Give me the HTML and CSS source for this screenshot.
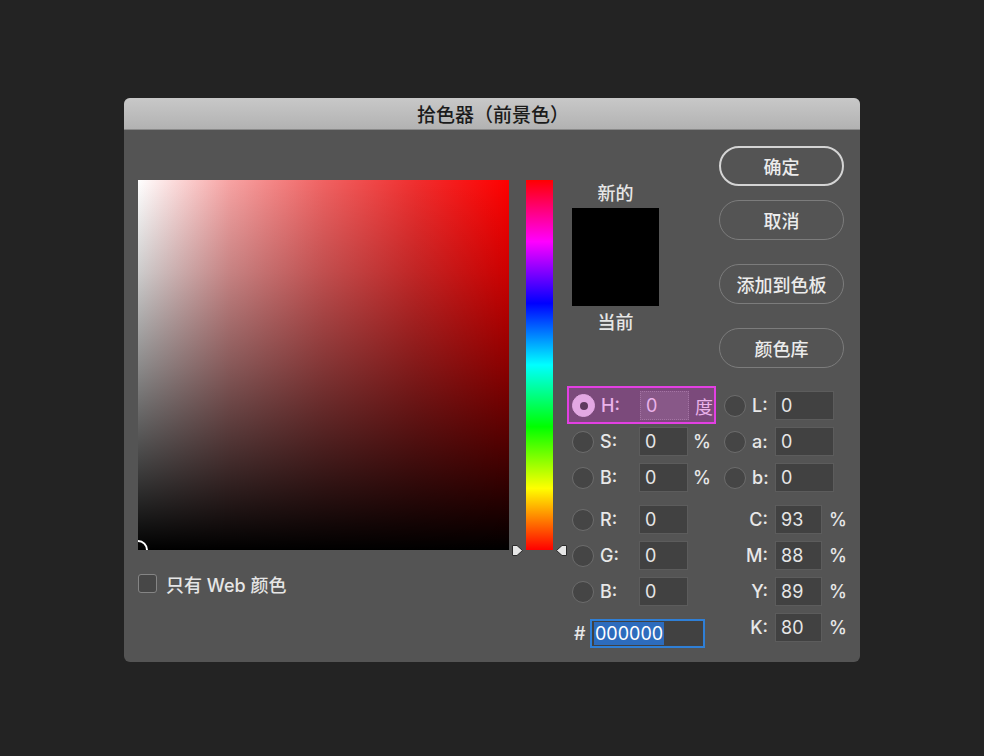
FILE: index.html
```html
<!DOCTYPE html>
<html lang="zh-CN">
<head>
<meta charset="utf-8">
<title>拾色器（前景色）</title>
<link rel="stylesheet" href="styles.css">
</head>
<body>
<div class="dialog">
  <div class="titlebar">拾色器（前景色）</div>
  <div class="content">
    <div class="left">
      <div class="field">
        <div class="field-marker"></div>
      </div>
      <div class="webonly"><span class="checkbox"></span><span>只有 Web 颜色</span></div>
    </div>
    <div class="hue-wrap">
      <div class="hue"></div>
      <svg class="tri tri-l" width="13" height="13" viewBox="0 0 13 13"><path d="M1.5 1.5 H6 L11.5 6.5 L6 11.5 H1.5 Z" fill="#e6e6e6" stroke="#2a2a2a" stroke-width="1" stroke-linejoin="round"/></svg>
      <svg class="tri tri-r" width="13" height="13" viewBox="0 0 13 13"><path d="M11.5 1.5 H7 L1.5 6.5 L7 11.5 H11.5 Z" fill="#e6e6e6" stroke="#2a2a2a" stroke-width="1" stroke-linejoin="round"/></svg>
    </div>
    <div class="right">
      <div class="top">
        <div class="swatch-col">
          <div class="sw-label">新的</div>
          <div class="swatch"></div>
          <div class="sw-label sw-label-bottom">当前</div>
        </div>
        <div class="buttons">
          <div class="btn btn-default">确定</div>
          <div class="btn">取消</div>
          <div class="btn btn-gap">添加到色板</div>
          <div class="btn btn-gap">颜色库</div>
        </div>
      </div>
      <div class="fields">
        <div class="col col-a">
          <div class="row row-h"><span class="radio on"></span><span class="lbl">H:</span><span class="inp">0</span><span class="unit">度</span></div>
          <div class="row"><span class="radio"></span><span class="lbl">S:</span><span class="inp">0</span><span class="unit">%</span></div>
          <div class="row"><span class="radio"></span><span class="lbl">B:</span><span class="inp">0</span><span class="unit">%</span></div>
          <div class="row row-sep"><span class="radio"></span><span class="lbl">R:</span><span class="inp">0</span></div>
          <div class="row"><span class="radio"></span><span class="lbl">G:</span><span class="inp">0</span></div>
          <div class="row"><span class="radio"></span><span class="lbl">B:</span><span class="inp">0</span></div>
          <div class="row row-hex"><span class="hash">#</span><span class="hex"><span class="sel">000000</span></span></div>
        </div>
        <div class="col col-b">
          <div class="row"><span class="radio"></span><span class="lbl lbl-b">L:</span><span class="inp inp-wide">0</span></div>
          <div class="row"><span class="radio"></span><span class="lbl lbl-b">a:</span><span class="inp inp-wide">0</span></div>
          <div class="row"><span class="radio"></span><span class="lbl lbl-b">b:</span><span class="inp inp-wide">0</span></div>
          <div class="row row-sep"><span class="lbl lbl-c">C:</span><span class="inp inp-c">93</span><span class="unit unit-c">%</span></div>
          <div class="row"><span class="lbl lbl-c">M:</span><span class="inp inp-c">88</span><span class="unit unit-c">%</span></div>
          <div class="row"><span class="lbl lbl-c">Y:</span><span class="inp inp-c">89</span><span class="unit unit-c">%</span></div>
          <div class="row"><span class="lbl lbl-c">K:</span><span class="inp inp-c">80</span><span class="unit unit-c">%</span></div>
        </div>
      </div>
    </div>
  </div>
</div>
</body>
</html>
```

FILE: styles.css
```css
html, body {
  margin: 0;
  padding: 0;
}
body {
  background: #232323;
  width: 984px;
  height: 756px;
  padding-top: 98px;
  box-sizing: border-box;
  font-family: Inter, "Noto Sans CJK SC", sans-serif;
  font-size: 18px;
  color: #e8e8e8;
}
.dialog {
  width: 736px;
  height: 564px;
  margin: 0 auto;
  background: #545454;
  border-radius: 6px;
  overflow: hidden;
}
.titlebar {
  height: 32px;
  box-sizing: border-box;
  display: flex;
  align-items: center;
  justify-content: center;
  background: linear-gradient(#c8c8c8, #b2b2b2);
  border-bottom: 1px solid #8a8a8a;
  color: #1b1b1b;
  font-size: 19px;
  font-weight: 500;
  padding-left: 2px;
}
.content {
  display: flex;
  padding: 0 16px 0 14px;
  height: 532px;
}
.left {
  width: 371px;
  flex: none;
  margin-right: 17px;
}
.field {
  position: relative;
  margin-top: 50px;
  width: 371px;
  height: 370px;
  overflow: hidden;
  background:
    linear-gradient(to top, #000 0%, rgba(0,0,0,0.72) 25%, rgba(0,0,0,0.45) 50%, rgba(0,0,0,0.2) 75%, rgba(0,0,0,0) 100%),
    linear-gradient(to right, #fff 0%, #f7a2a2 25%, #f06262 50%, #f02e2e 75%, #f00 100%);
}
.field-marker {
  position: absolute;
  left: -10px;
  bottom: -10px;
  width: 20px;
  height: 20px;
  box-sizing: border-box;
  border: 2px solid #fff;
  border-radius: 50%;
}
.webonly {
  display: flex;
  align-items: center;
  margin-top: 24px;
  height: 19px;
  font-weight: 500;
  color: #e6e6e6;
}
.checkbox {
  width: 19px;
  height: 19px;
  box-sizing: border-box;
  border: 1px solid #858585;
  border-radius: 3px;
  background: #474747;
  margin-right: 9px;
}
.hue-wrap {
  position: relative;
  width: 27px;
  flex: none;
  margin-right: 14px;
}
.hue {
  margin-top: 50px;
  height: 370px;
  background: linear-gradient(to bottom, #f00 0%, #f0f 16.67%, #00f 33.33%, #0ff 50%, #0f0 66.67%, #ff0 83.33%, #f00 100%);
}
.tri {
  position: absolute;
  top: 414px;
}
.tri-l { left: -15px; }
.tri-r { left: 29px; }
.right {
  width: 277px;
  flex: none;
}
.top {
  display: flex;
  padding-top: 16px;
}
.swatch-col {
  width: 152px;
  flex: none;
  padding: 38px 0 0 5px;
  box-sizing: border-box;
}
.sw-label {
  width: 87px;
  height: 20px;
  line-height: 20px;
  text-align: center;
  font-weight: 500;
  color: #e6e6e6;
}
.swatch {
  width: 87px;
  height: 98px;
  margin-top: 4px;
  background: #000;
}
.sw-label-bottom {
  margin-top: 7px;
}
.buttons {
  width: 125px;
  flex: none;
  display: flex;
  flex-direction: column;
  gap: 14px;
}
.btn {
  height: 40px;
  box-sizing: border-box;
  border: 1px solid #7c7c7c;
  border-radius: 20px;
  display: flex;
  align-items: center;
  justify-content: center;
  font-weight: 500;
  color: #ececec;
}
.btn-default {
  border: 2px solid #d4d4d4;
}
.btn-gap {
  margin-top: 10px;
}
.fields {
  display: flex;
  gap: 8px;
  margin-top: 23px;
}
.col {
  display: flex;
  flex-direction: column;
  gap: 7px;
}
.col-a { width: 150px; }
.col-b { width: 120px; }
.row {
  display: flex;
  align-items: center;
  height: 29px;
}
.col-a .row {
  padding-left: 5px;
}
.row-sep {
  margin-top: 6px;
}
.radio {
  width: 22px;
  height: 22px;
  box-sizing: border-box;
  border-radius: 50%;
  background: #454545;
  border: 1px solid #6c6c6c;
  flex: none;
  display: flex;
  align-items: center;
  justify-content: center;
}
.radio.on {
  background: #e3a8e3;
  border-color: #e3a8e3;
}
.radio.on::after {
  content: "";
  width: 8px;
  height: 8px;
  border-radius: 50%;
  background: #5e3a5e;
}
.lbl {
  width: 39px;
  margin-left: 6px;
  font-weight: 500;
  flex: none;
}
.inp {
  width: 49px;
  height: 29px;
  box-sizing: border-box;
  border: 1px solid #5c5c5c;
  background: #414141;
  padding-left: 5px;
  display: flex;
  align-items: center;
  color: #e6e6e6;
  flex: none;
}
.unit {
  margin-left: 5px;
  font-weight: 500;
}
.row.row-h {
  margin: -5px 0 -4px;
  padding: 3px 0 2px 3px;
  height: 38px;
  box-sizing: border-box;
  border: 2px solid #e33fe3;
  background: #7b4a7b;
  color: #eab2ea;
}
.row-h .radio {
  width: 23px;
  height: 23px;
}
.row-h .inp {
  background: #885888;
  border: 1px dotted #a474a4;
  color: #eab2ea;
}
.row-h .unit {
  margin-left: 6px;
  font-weight: 400;
}
.row-hex {
  margin-top: 6px;
}
.col-a .row.row-hex {
  padding-left: 7px;
}
.hash {
  width: 16px;
  font-weight: 500;
  flex: none;
}
.hex {
  width: 115px;
  height: 29px;
  box-sizing: border-box;
  border: 2px solid #2f7fd6;
  background: #414141;
  padding-left: 2px;
  display: flex;
  align-items: center;
}
.sel {
  background: #2d6cbd;
  color: #fff;
  height: 23px;
  line-height: 23px;
  padding: 0 1px;
}
.lbl-b {
  width: 23px;
}
.inp-wide {
  width: 59px;
}
.lbl-c {
  width: 51px;
  margin-left: 0;
  text-align: right;
  padding-right: 7px;
  box-sizing: border-box;
}
.inp-c {
  width: 47px;
}
.unit-c {
  margin-left: 7px;
}
```
